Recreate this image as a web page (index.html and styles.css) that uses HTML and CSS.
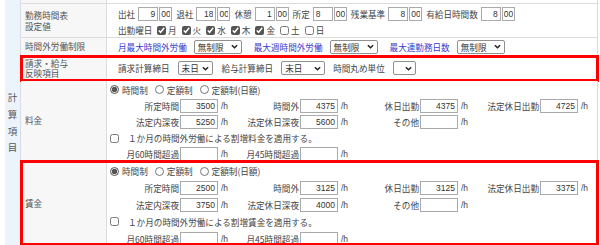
FILE: index.html
```html
<!DOCTYPE html>
<html lang="ja">
<head>
<meta charset="utf-8">
<title>計算項目</title>
<link rel="stylesheet" href="styles.css">
</head>
<body>
<div class="sheet">
  <div class="strip"><span>計</span><span>算</span><span>項</span><span>目</span></div>
  <div class="rows">
    <div class="row r0"><div class="label"></div><div class="content"></div></div>

    <div class="row r1">
      <div class="label">勤務時間表<br>設定値</div>
      <div class="content pad">
        <div class="line l1">
          <span class="tg"><span class="tl">出社</span><input class="hh" value="9"><input class="mm" value="00"></span>
          <span class="tg"><span class="tl">退社</span><input class="hh" value="18"><input class="mm" value="00"></span>
          <span class="tg"><span class="tl">休憩</span><input class="hh" value="1"><input class="mm" value="00"></span>
          <span class="tg"><span class="tl">所定</span><input class="hh left" value="8"><input class="mm" value="00"></span>
          <span class="tg"><span class="tl">残業基準</span><input class="hh" value="8"><input class="mm" value="00"></span>
          <span class="tg"><span class="tl">有給日時間数</span><input class="hh" value="8"><input class="mm" value="00"></span>
        </div>
        <div class="line l2">
          <span class="dl">出勤曜日</span>
          <label class="day"><input type="checkbox" checked>月</label>
          <label class="day"><input type="checkbox" checked>火</label>
          <label class="day"><input type="checkbox" checked>水</label>
          <label class="day"><input type="checkbox" checked>木</label>
          <label class="day"><input type="checkbox" checked>金</label>
          <label class="day"><input type="checkbox">土</label>
          <label class="day"><input type="checkbox">日</label>
        </div>
      </div>
    </div>

    <div class="row r2">
      <div class="label">時間外労働制限</div>
      <div class="content pad mid">
        <span class="blue">月最大時間外労働</span>
        <span class="sel w48">無制限<svg class="chev" viewBox="0 0 8 5"><path d="M1 1l3 3 3-3"/></svg></span>
        <span class="blue">最大週時間外労働</span>
        <span class="sel w48">無制限<svg class="chev" viewBox="0 0 8 5"><path d="M1 1l3 3 3-3"/></svg></span>
        <span class="blue">最大連勤務日数</span>
        <span class="sel w48">無制限<svg class="chev" viewBox="0 0 8 5"><path d="M1 1l3 3 3-3"/></svg></span>
      </div>
    </div>

    <div class="row r3 hl">
      <div class="label">請求・給与<br>反映項目</div>
      <div class="content pad mid">
        <span class="sl">請求計算締日</span>
        <span class="sel w35">末日<svg class="chev" viewBox="0 0 8 5"><path d="M1 1l3 3 3-3"/></svg></span>
        <span class="sl">給与計算締日</span>
        <span class="sel w44">末日<svg class="chev" viewBox="0 0 8 5"><path d="M1 1l3 3 3-3"/></svg></span>
        <span class="sl">時間丸め単位</span>
        <span class="sel w23"><svg class="chev" viewBox="0 0 8 5"><path d="M1 1l3 3 3-3"/></svg></span>
      </div>
    </div>

    <div class="row r4">
      <div class="label">料金</div>
      <div class="content calc">
        <div class="rad">
          <label><input type="radio" name="fee" checked>時間制</label>
          <label><input type="radio" name="fee">定額制</label>
          <label><input type="radio" name="fee">定額制(日額)</label>
        </div>
        <div class="rl">
          <span class="rg"><span class="rlab">所定時間</span><input class="num" value="3500"><span class="u">/h</span></span>
          <span class="rg"><span class="rlab">時間外</span><input class="num" value="4375"><span class="u">/h</span></span>
          <span class="rg"><span class="rlab">休日出勤</span><input class="num" value="4375"><span class="u">/h</span></span>
          <span class="rg"><span class="rlab">法定休日出勤</span><input class="num" value="4725"><span class="u">/h</span></span>
        </div>
        <div class="rl">
          <span class="rg"><span class="rlab">法定内深夜</span><input class="num" value="5250"><span class="u">/h</span></span>
          <span class="rg"><span class="rlab">法定休日深夜</span><input class="num" value="5600"><span class="u">/h</span></span>
          <span class="rg"><span class="rlab">その他</span><input class="num" value=""><span class="u">/h</span></span>
        </div>
        <div class="cl"><input type="checkbox"><span>１か月の時間外労働による割増料金を適用する。</span></div>
        <div class="rl">
          <span class="rg"><span class="rlab">月60時間超過</span><input class="num" value=""><span class="u">/h</span></span>
          <span class="rg"><span class="rlab">月45時間超過</span><input class="num" value=""><span class="u">/h</span></span>
        </div>
      </div>
    </div>

    <div class="row r5 hl">
      <div class="label">賃金</div>
      <div class="content calc wage">
        <div class="rad">
          <label><input type="radio" name="wage" checked>時間制</label>
          <label><input type="radio" name="wage">定額制</label>
          <label><input type="radio" name="wage">定額制(日額)</label>
        </div>
        <div class="rl">
          <span class="rg"><span class="rlab">所定時間</span><input class="num" value="2500"><span class="u">/h</span></span>
          <span class="rg"><span class="rlab">時間外</span><input class="num" value="3125"><span class="u">/h</span></span>
          <span class="rg"><span class="rlab">休日出勤</span><input class="num" value="3125"><span class="u">/h</span></span>
          <span class="rg"><span class="rlab">法定休日出勤</span><input class="num" value="3375"><span class="u">/h</span></span>
        </div>
        <div class="rl">
          <span class="rg"><span class="rlab">法定内深夜</span><input class="num" value="3750"><span class="u">/h</span></span>
          <span class="rg"><span class="rlab">法定休日深夜</span><input class="num" value="4000"><span class="u">/h</span></span>
          <span class="rg"><span class="rlab">その他</span><input class="num" value=""><span class="u">/h</span></span>
        </div>
        <div class="cl"><input type="checkbox"><span>１か月の時間外労働による割増賃金を適用する。</span></div>
        <div class="rl">
          <span class="rg"><span class="rlab">月60時間超過</span><input class="num" value=""><span class="u">/h</span></span>
          <span class="rg"><span class="rlab">月45時間超過</span><input class="num" value=""><span class="u">/h</span></span>
        </div>
      </div>
    </div>
  </div>
</div>
</body>
</html>
```

FILE: styles.css
```css
* { box-sizing: border-box; }
html, body { margin: 0; padding: 0; background: #fff; }
body {
  width: 600px;
  height: 245px;
  overflow: hidden;
  font-family: "Noto Sans CJK JP", "Liberation Sans", sans-serif;
  font-size: 8.6px;
  color: #444;
}
.sheet {
  display: grid;
  grid-template-columns: 16px 577px;
  margin-left: 5px;
  width: 593px;
  height: 245px;
}
.strip {
  background: #edf3fa;
  border-right: 1px solid #d8dde4;
  display: flex;
  flex-direction: column;
  align-items: center;
  justify-content: center;
  font-size: 9.5px;
  line-height: 16.7px;
  color: #555;
}
.rows { display: flex; flex-direction: column; }
.row { display: flex; flex: none; border-bottom: 1px solid #dcdcdc; }
.label {
  width: 86px;
  flex: none;
  background: #f7f7f7;
  border-right: 1px solid #dcdcdc;
  padding-left: 4px;
  display: flex;
  align-items: center;
  color: #555;
  line-height: 10.5px;
}
.content { flex: 1; background: #fff; border-right: 1px solid #dcdcdc; overflow: hidden; }
.pad { padding-left: 11px; }
.mid { display: flex; align-items: center; white-space: nowrap; }

.r0 { height: 4px; }
.r1 { height: 34px; }
.r2 { height: 18px; }
.r3 { height: 25px; }
.r4 { height: 80px; }
.r5 { height: 84px; border-bottom: none; }
.hl { outline: 3px solid #f00; outline-offset: -2px; }

/* time inputs */
input { font-family: "Liberation Sans", sans-serif; }
.line { display: flex; align-items: center; white-space: nowrap; }
.l1 { height: 17px; margin-top: 1px; }
.l2 { height: 16px; }
.tg { display: flex; align-items: center; margin-right: 4px; }
.tl { margin-right: 3px; }
.hh, .mm, .num {
  height: 14px;
  border: 1px solid #aaa;
  border-radius: 0;
  padding: 0 2px 0 1px;
  margin: 0;
  font-size: 8.5px;
  color: #333;
  text-align: right;
  background: #fff;
  outline: none;
}
.hh { width: 20px; margin-right: 1px; }
.hh.left { text-align: left; padding-left: 2px; }
.mm { width: 13px; padding: 0 1px; }
.dl { margin-right: 4.6px; }
.day { display: flex; align-items: center; margin-right: 5px; }
input[type="checkbox"], input[type="radio"] {
  width: 9px;
  height: 9px;
  margin: 0 2px 0 0;
  accent-color: #555;
}

/* selects */
.blue { color: #3a3acc; margin-right: 7px; }
.sel {
  display: inline-flex;
  align-items: center;
  justify-content: space-between;
  height: 14px;
  border: 1px solid #8f8f8f;
  border-radius: 2px;
  padding: 0 3px 0 3px;
  color: #333;
  background: #fff;
  flex: none;
}
.sel.w23 { justify-content: flex-end; }
.w48 { width: 48px; margin-right: 12px; }
.w35 { width: 35px; margin-right: 9px; }
.w44 { width: 44px; margin-right: 8px; }
.w23 { width: 23px; }
.sl { margin-right: 8px; }
.chev { width: 7px; height: 5px; }
.chev path { fill: none; stroke: #222; stroke-width: 1.7; }

/* calc rows */
.calc { padding-left: 3px; }
.rad { display: flex; align-items: center; height: 17px; white-space: nowrap; }
.wage { padding-top: 2px; }
.wage .rad { height: 16px; }
.rad label { display: flex; align-items: center; margin-right: 7px; }
.rad input { margin-right: 3px; }
.rl { display: flex; align-items: center; height: 16px; white-space: nowrap; }
.wage .rl, .wage .cl { height: 17px; }
.rg { width: 120px; flex: none; display: flex; align-items: center; }
.rlab { width: 69px; margin-right: 1px; text-align: right; }
.num { width: 38px; }
.u { margin-left: 3px; font-family: "Liberation Sans", sans-serif; font-size: 8.5px; }
.cl { display: flex; align-items: center; height: 16px; white-space: nowrap; }
.cl input { margin-right: 9px; }
```
